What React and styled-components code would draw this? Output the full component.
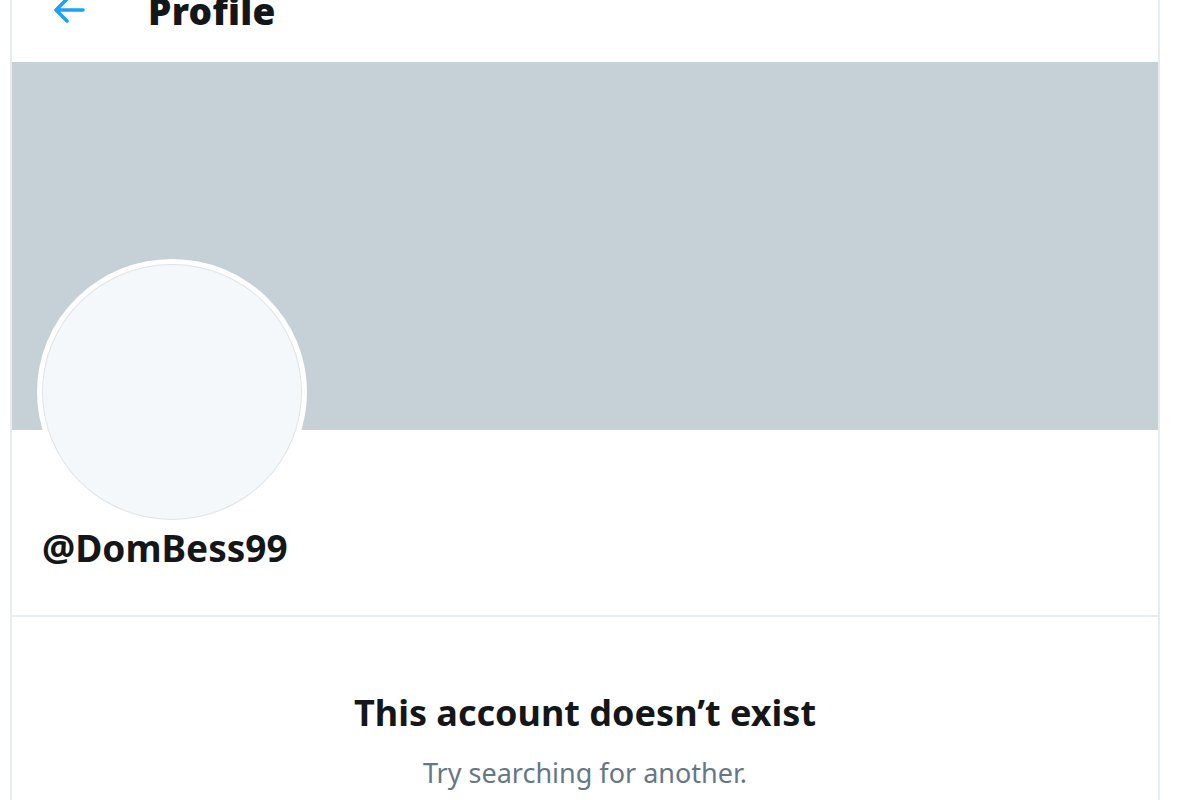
import React from 'react';
import styled, { createGlobalStyle } from 'styled-components';

const GlobalStyle = createGlobalStyle`
  html, body {
    margin: 0;
    padding: 0;
    background: #ffffff;
    overflow: hidden;
  }
  body {
    font-family: "Noto Sans", "Open Sans", Arial, sans-serif;
    color: #14171a;
  }
`;

function BackArrow() {
  return (
    <svg width="34" height="30" viewBox="0 0 34 30" fill="none">
      <path
        d="M31 15H5M15 4L4 15l11 11"
        stroke="#1da1f2"
        strokeWidth="3.6"
        strokeLinecap="round"
        strokeLinejoin="round"
      />
    </svg>
  );
}

export default function App() {
  return (
    <Page>
      <GlobalStyle />
      <Column>
        <Header>
          <BackButton aria-label="Back">
            <BackArrow />
          </BackButton>
          <Title>Profile</Title>
        </Header>
        <Banner />
        <ProfileInfo>
          <Avatar>
            <AvatarInner />
          </Avatar>
          <Handle>@DomBess99</Handle>
        </ProfileInfo>
        <EmptyState>
          <EmptyTitle>This account doesn’t exist</EmptyTitle>
          <EmptyText>Try searching for another.</EmptyText>
        </EmptyState>
      </Column>
    </Page>
  );
}

const Page = styled.div`
  width: 1200px;
  height: 800px;
  overflow: hidden;
  background: #ffffff;
`;

const Column = styled.div`
  margin-left: 10px;
  width: 1146px;
  min-height: 900px;
  border-left: 2px solid #e6ecf0;
  border-right: 2px solid #e6ecf0;
`;

const Header = styled.div`
  height: 104px;
  margin-top: -42px;
  display: flex;
  align-items: center;
  padding-left: 40px;
  box-sizing: border-box;
`;

const BackButton = styled.div`
  display: flex;
  align-items: center;
  width: 34px;
  height: 30px;
  margin-right: 62px;
`;

const Title = styled.h2`
  margin: 0;
  font-size: 37px;
  font-weight: 900;
  letter-spacing: 0.3px;
  color: #14171a;
`;

const Banner = styled.div`
  height: 368px;
  background: #c5d0d7;
`;

const ProfileInfo = styled.div`
  padding: 0 0 44px 25px;
  border-bottom: 2px solid #e6ecf0;
`;

const Avatar = styled.div`
  width: 270px;
  height: 266px;
  margin-top: -171px;
  border-radius: 50%;
  background: #ffffff;
  padding: 5px;
  box-sizing: border-box;
`;

const AvatarInner = styled.div`
  width: 100%;
  height: 100%;
  border-radius: 50%;
  background: #f5f8fa;
  border: 1px solid #dfe4e8;
  box-sizing: border-box;
`;

const Handle = styled.div`
  margin-top: 0;
  margin-left: 5px;
  font-size: 37px;
  font-weight: 700;
  line-height: 46px;
  color: #14171a;
`;

const EmptyState = styled.div`
  display: flex;
  flex-direction: column;
  align-items: center;
  padding-top: 72px;
`;

const EmptyTitle = styled.div`
  font-size: 36px;
  font-weight: 700;
  line-height: 48px;
  color: #14171a;
`;

const EmptyText = styled.div`
  margin-top: 18px;
  font-size: 27px;
  line-height: 36px;
  color: #657786;
`;
